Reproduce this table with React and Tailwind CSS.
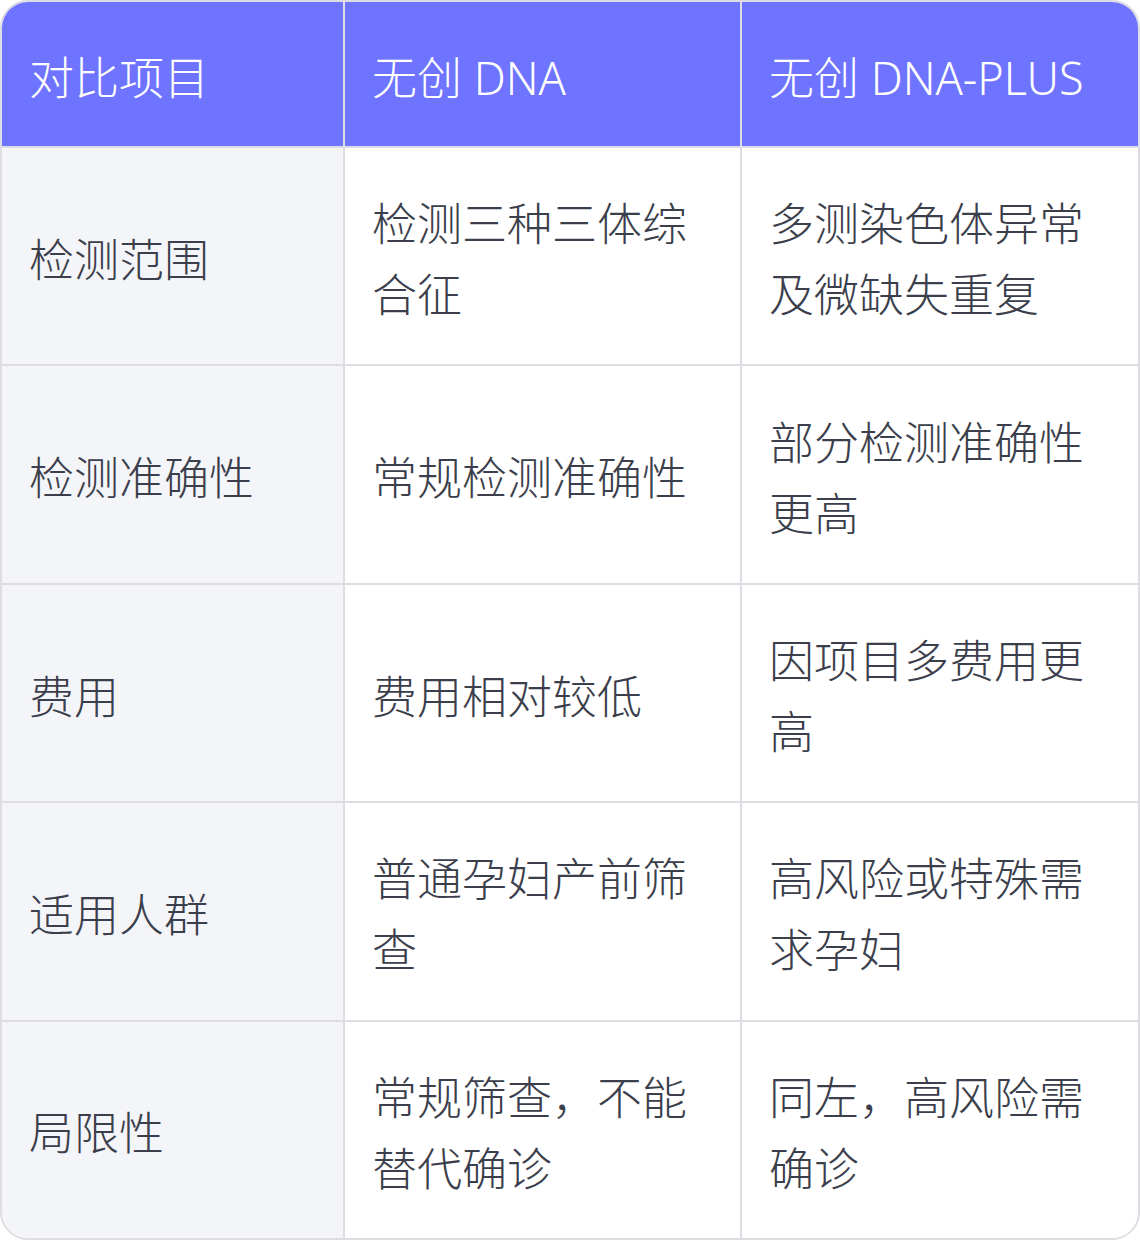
import React from "react";

const headers = ["对比项目", "无创 DNA", "无创 DNA-PLUS"];

const rows = [
  ["检测范围", "检测三种三体综合征", "多测染色体异常及微缺失重复"],
  ["检测准确性", "常规检测准确性", "部分检测准确性更高"],
  ["费用", "费用相对较低", "因项目多费用更高"],
  ["适用人群", "普通孕妇产前筛查", "高风险或特殊需求孕妇"],
  ["局限性", "常规筛查，不能替代确诊", "同左，高风险需确诊"],
];

const font = { fontFamily: '"Noto Sans", "Noto Sans CJK SC", sans-serif' };

const App = () => {
  return (
    <div className="w-[1140px] h-[1240px] bg-white" style={font}>
      <div className="h-full rounded-[28px] border-2 border-[#dddde3] overflow-hidden flex flex-col">
        {/* header */}
        <div className="grid grid-cols-[343px_397px_1fr] h-[146px] bg-[#6e74ff] border-b-2 border-[#dddde3]">
          {headers.map((h, i) => (
            <div
              key={h}
              className={`flex items-center pl-[27px] pr-[28px] pt-[6px] text-[45px] leading-[71px] font-light text-white whitespace-nowrap ${i < 2 ? "border-r-2 border-[#dddde3]" : ""}`}
            >
              {h}
            </div>
          ))}
        </div>

        {/* body */}
        {rows.map((row, r) => (
          <div
            key={row[0]}
            className={`grid grid-cols-[343px_397px_1fr] flex-1 ${r < rows.length - 1 ? "border-b-2 border-[#dddde3]" : ""}`}
          >
            {row.map((cell, i) => (
              <div
                key={i}
                className={`flex items-center pl-[27px] pr-[28px] pt-[6px] text-[45px] leading-[71px] font-light text-[#3b3e4b] ${i === 0 ? "bg-[#f4f5f9]" : "bg-white"} ${i < 2 ? "border-r-2 border-[#dddde3]" : ""}`}
              >
                <span>{cell}</span>
              </div>
            ))}
          </div>
        ))}
      </div>
    </div>
  );
};

export default App;
